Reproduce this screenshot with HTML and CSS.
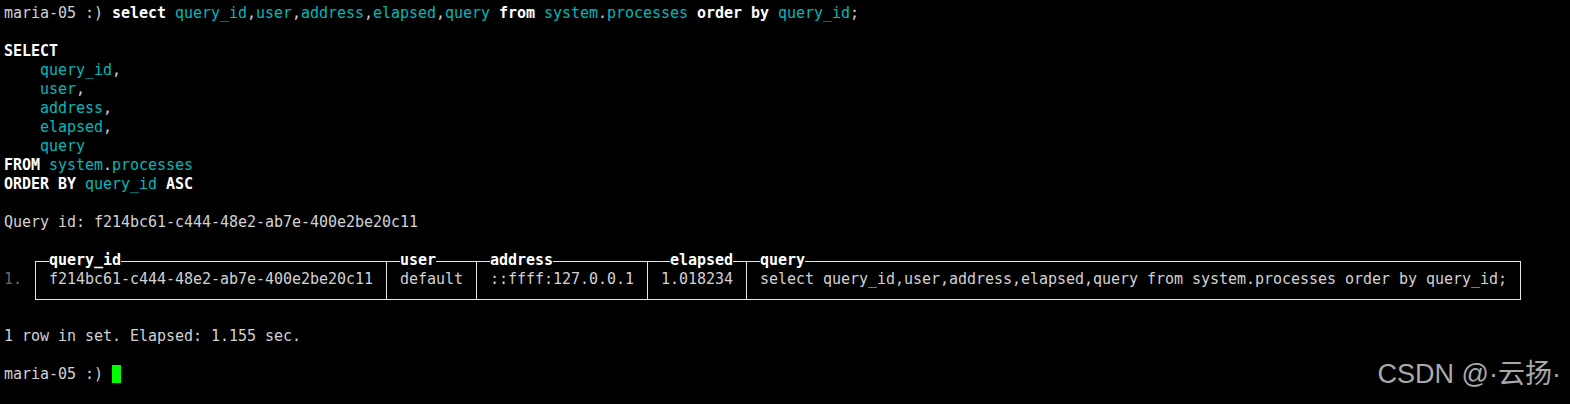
FILE: index.html
```html
<!DOCTYPE html>
<html>
<head>
<meta charset="utf-8">
<link rel="stylesheet" href="styles.css">
</head>
<body>
<div class="term">
<div class="ln">maria-05 :) <span class="k">select</span> <span class="c">query_id</span>,<span class="c">user</span>,<span class="c">address</span>,<span class="c">elapsed</span>,<span class="c">query</span> <span class="k">from</span> <span class="c">system</span>.<span class="c">processes</span> <span class="k">order</span> <span class="k">by</span> <span class="c">query_id</span>;</div>
<div class="ln"></div>
<div class="ln"><span class="k">SELECT</span></div>
<div class="ln">    <span class="c">query_id</span>,</div>
<div class="ln">    <span class="c">user</span>,</div>
<div class="ln">    <span class="c">address</span>,</div>
<div class="ln">    <span class="c">elapsed</span>,</div>
<div class="ln">    <span class="c">query</span></div>
<div class="ln"><span class="k">FROM</span> <span class="c">system</span>.<span class="c">processes</span></div>
<div class="ln"><span class="k">ORDER BY</span> <span class="c">query_id</span> <span class="k">ASC</span></div>
<div class="ln"></div>
<div class="ln">Query id: f214bc61-c444-48e2-ab7e-400e2be20c11</div>
<div class="ln"></div>
<div class="result">
  <div class="rownum">1.</div>
  <div class="tbl">
    <div class="col w1"><div class="hd"><span>query_id</span></div><div class="cell">f214bc61-c444-48e2-ab7e-400e2be20c11</div></div>
    <div class="col w2"><div class="hd"><span>user</span></div><div class="cell">default</div></div>
    <div class="col w3"><div class="hd"><span>address</span></div><div class="cell">::ffff:127.0.0.1</div></div>
    <div class="col w4 r"><div class="hd"><span>elapsed</span></div><div class="cell">1.018234</div></div>
    <div class="col w5"><div class="hd"><span>query</span></div><div class="cell">select query_id,user,address,elapsed,query from system.processes order by query_id;</div></div>
  </div>
</div>
<div class="ln"></div>
<div class="ln">1 row in set. Elapsed: 1.155 sec.</div>
<div class="ln"></div>
<div class="ln">maria-05 :) <span class="cursor"></span></div>
</div>
<div class="watermark">CSDN @·云扬·</div>
</body>
</html>
```
FILE: styles.css
```css
html, body {
  margin: 0;
  background: #000;
}
body {
  width: 1570px;
  height: 404px;
  overflow: hidden;
  position: relative;
}
.term {
  padding: 4px 0 0 4px;
  font-family: "DejaVu Sans Mono", monospace;
  font-size: 15px;
  line-height: 19px;
  letter-spacing: -0.031px;
  color: #d2d2d2;
}
.ln, .cell, .hd, .rownum {
  white-space: pre;
}
.ln {
  height: 19px;
}
.k {
  font-weight: bold;
  color: #ffffff;
}
.c {
  color: #00b9b9;
}
.result {
  display: flex;
  height: 57px;
}
.rownum {
  width: 31px;
  height: 19px;
  margin-top: 19px;
  color: #6a6a6a;
}
.tbl {
  display: flex;
  align-self: flex-start;
  margin-top: 10px;
}
.col {
  box-sizing: border-box;
  border-left: 1px solid #e6e6e6;
  border-top: 1px solid #e6e6e6;
  border-bottom: 1px solid #e6e6e6;
  padding: 0 13px 10px 13px;
}
.col:last-child {
  border-right: 1px solid #e6e6e6;
}
.w1 { width: 351px; }
.w2 { width: 90px; }
.w3 { width: 171px; }
.w4 { width: 99px; }
.w5 { width: 775px; }
.r { text-align: right; }
.hd {
  height: 19px;
  margin-top: -11px;
  font-weight: bold;
  color: #ffffff;
}
.hd span {
  background: #000;
}
.cell {
  height: 19px;
}
.cursor {
  display: inline-block;
  width: 9px;
  height: 18px;
  background: #00ff00;
  vertical-align: -4px;
}
.watermark {
  position: absolute;
  top: 361px;
  right: 9px;
  font-family: "Liberation Sans", "Noto Sans CJK SC", sans-serif;
  font-size: 27px;
  line-height: 27px;
  color: #a9a9a9;
  white-space: nowrap;
}
```
